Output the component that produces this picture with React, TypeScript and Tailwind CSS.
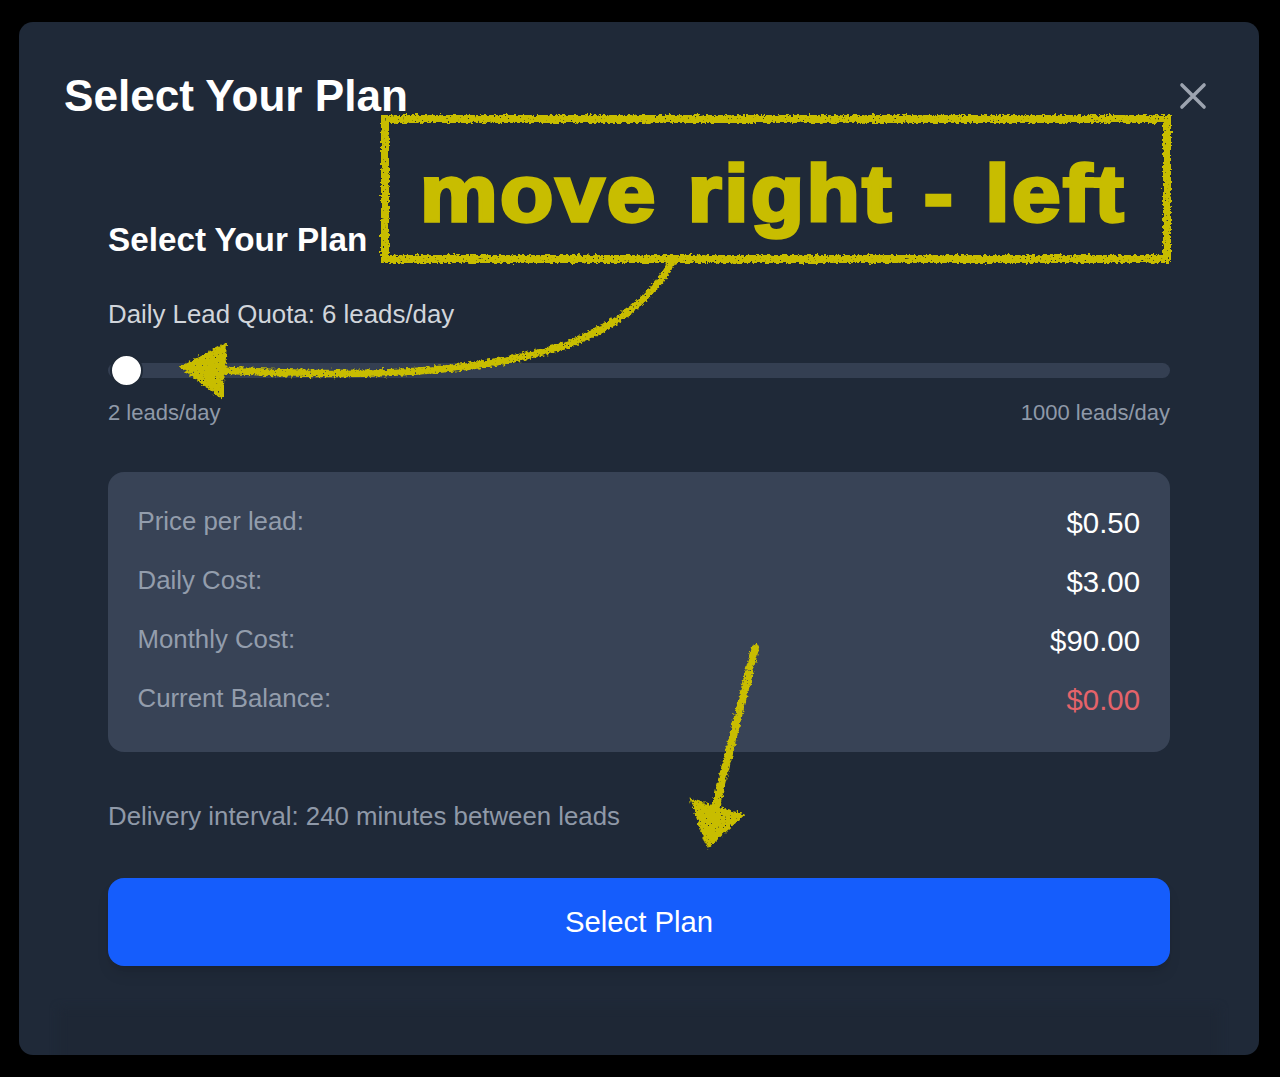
import React from "react";

const rows = [
  { label: "Price per lead:", value: "$0.50", color: "text-white" },
  { label: "Daily Cost:", value: "$3.00", color: "text-white" },
  { label: "Monthly Cost:", value: "$90.00", color: "text-white" },
  { label: "Current Balance:", value: "$0.00", color: "text-[#e5636a]" },
];

function Annotations() {
  const y = "#c8bd00";
  return (
    <svg className="absolute left-0 top-0 pointer-events-none" width="1280" height="1077" viewBox="0 0 1280 1077" fill="none">
      <defs>
        <filter id="chalk" x="-10%" y="-10%" width="120%" height="120%">
          <feTurbulence type="fractalNoise" baseFrequency="0.32" numOctaves="2" seed="4" result="n" />
          <feDisplacementMap in="SourceGraphic" in2="n" scale="6" xChannelSelector="R" yChannelSelector="G" result="d" />
          <feTurbulence type="fractalNoise" baseFrequency="0.6" numOctaves="1" seed="9" result="s" />
          <feColorMatrix in="s" type="matrix" values="0 0 0 0 0  0 0 0 0 0  0 0 0 0 0  0 0 0 -14 10.6" result="holes" />
          <feComposite in="d" in2="holes" operator="in" />
        </filter>
      </defs>
      <g filter="url(#chalk)" stroke={y}>
        <rect x="385" y="119" width="782" height="140" strokeWidth="8" />
      </g>
      <g filter="url(#chalk)">
        <path d="M672 262 C 652 298, 622 322, 572 343 C 500 368, 400 380, 222 370" stroke={y} strokeWidth="7.5" strokeLinecap="round" />
        <path d="M181 367 L226 344 L222 398 Z" fill={y} stroke={y} strokeWidth="2" />
      </g>
      <g filter="url(#chalk)">
        <path d="M755 648 L716 805" stroke={y} strokeWidth="8" strokeLinecap="round" />
        <path d="M691 800 L743 815 L708 847 Z" fill={y} stroke={y} strokeWidth="2" />
      </g>
      <text transform="translate(420 220.5) scale(1.105 1)" fill={y} fontSize="79" fontWeight="700" letterSpacing="2.2" wordSpacing="3" stroke={y} strokeWidth="3.4" className="font-['Liberation_Sans',Arial,sans-serif]">move right - left</text>
    </svg>
  );
}

export default function App() {
  return (
    <div className="relative h-[1077px] w-[1280px] overflow-hidden bg-black pl-[19px] pt-[22px] font-['Liberation_Sans',Arial,sans-serif]">
      <div className="h-[1033px] w-[1240px] overflow-hidden rounded-[14px] bg-[#1f2938]">
        <div className="flex items-center justify-between pl-[45px] pr-[47px] pt-[49px]">
          <h1 className="text-[44.1px] font-bold leading-[50px] text-white">Select Your Plan</h1>
          <svg width="38" height="38" viewBox="0 0 24 24" fill="none" stroke="#9ca3af" strokeWidth="2.2" strokeLinecap="round"><path d="M5 5 19 19M19 5 5 19" /></svg>
        </div>
        <div className="mx-[89px] mt-[99px]">
          <h2 className="text-[33.25px] font-bold leading-[40px] text-white">Select Your Plan</h2>
          <p className="mt-[38px] text-[25.85px] leading-[32px] text-[#d1d5db]">Daily Lead Quota: 6 leads/day</p>
          <div className="relative mt-[33px] h-[15px] rounded-full bg-[#343f52]">
            <div className="absolute left-[2px] top-[-9px] h-[33px] w-[33px] rounded-full border-2 border-[#1f2937] bg-white" />
          </div>
          <div className="mt-[21px] flex justify-between text-[22px] leading-[28px] text-[#8f99a8]">
            <span>2 leads/day</span>
            <span>1000 leads/day</span>
          </div>
          <div className="mt-[45px] flex h-[280px] flex-col rounded-[16px] bg-[#384356] pl-[29.5px] pr-[30px] pt-[21px]">
            {rows.map((r) => (
              <div key={r.label} className="flex h-[59px] items-start justify-between">
                <span className="text-[25.8px] leading-[56px] h-[56px] text-[#939dac]">{r.label}</span>
                <span className={`text-[29.4px] leading-[59px] ${r.color}`}>{r.value}</span>
              </div>
            ))}
          </div>
          <p className="mt-[47px] text-[25.8px] leading-[34px] text-[#8f99a8]">Delivery interval: 240 minutes between leads</p>
          <button className="mt-[45px] flex h-[88px] w-full items-center justify-center rounded-[16px] bg-[#155dfc] text-[29.3px] text-white shadow-lg">Select Plan</button>
        </div>
        <div className="mx-[40px] mt-[42px] h-[60px] bg-[#1e2735] blur-[4px]" />
      </div>
      <Annotations />
    </div>
  );
}
